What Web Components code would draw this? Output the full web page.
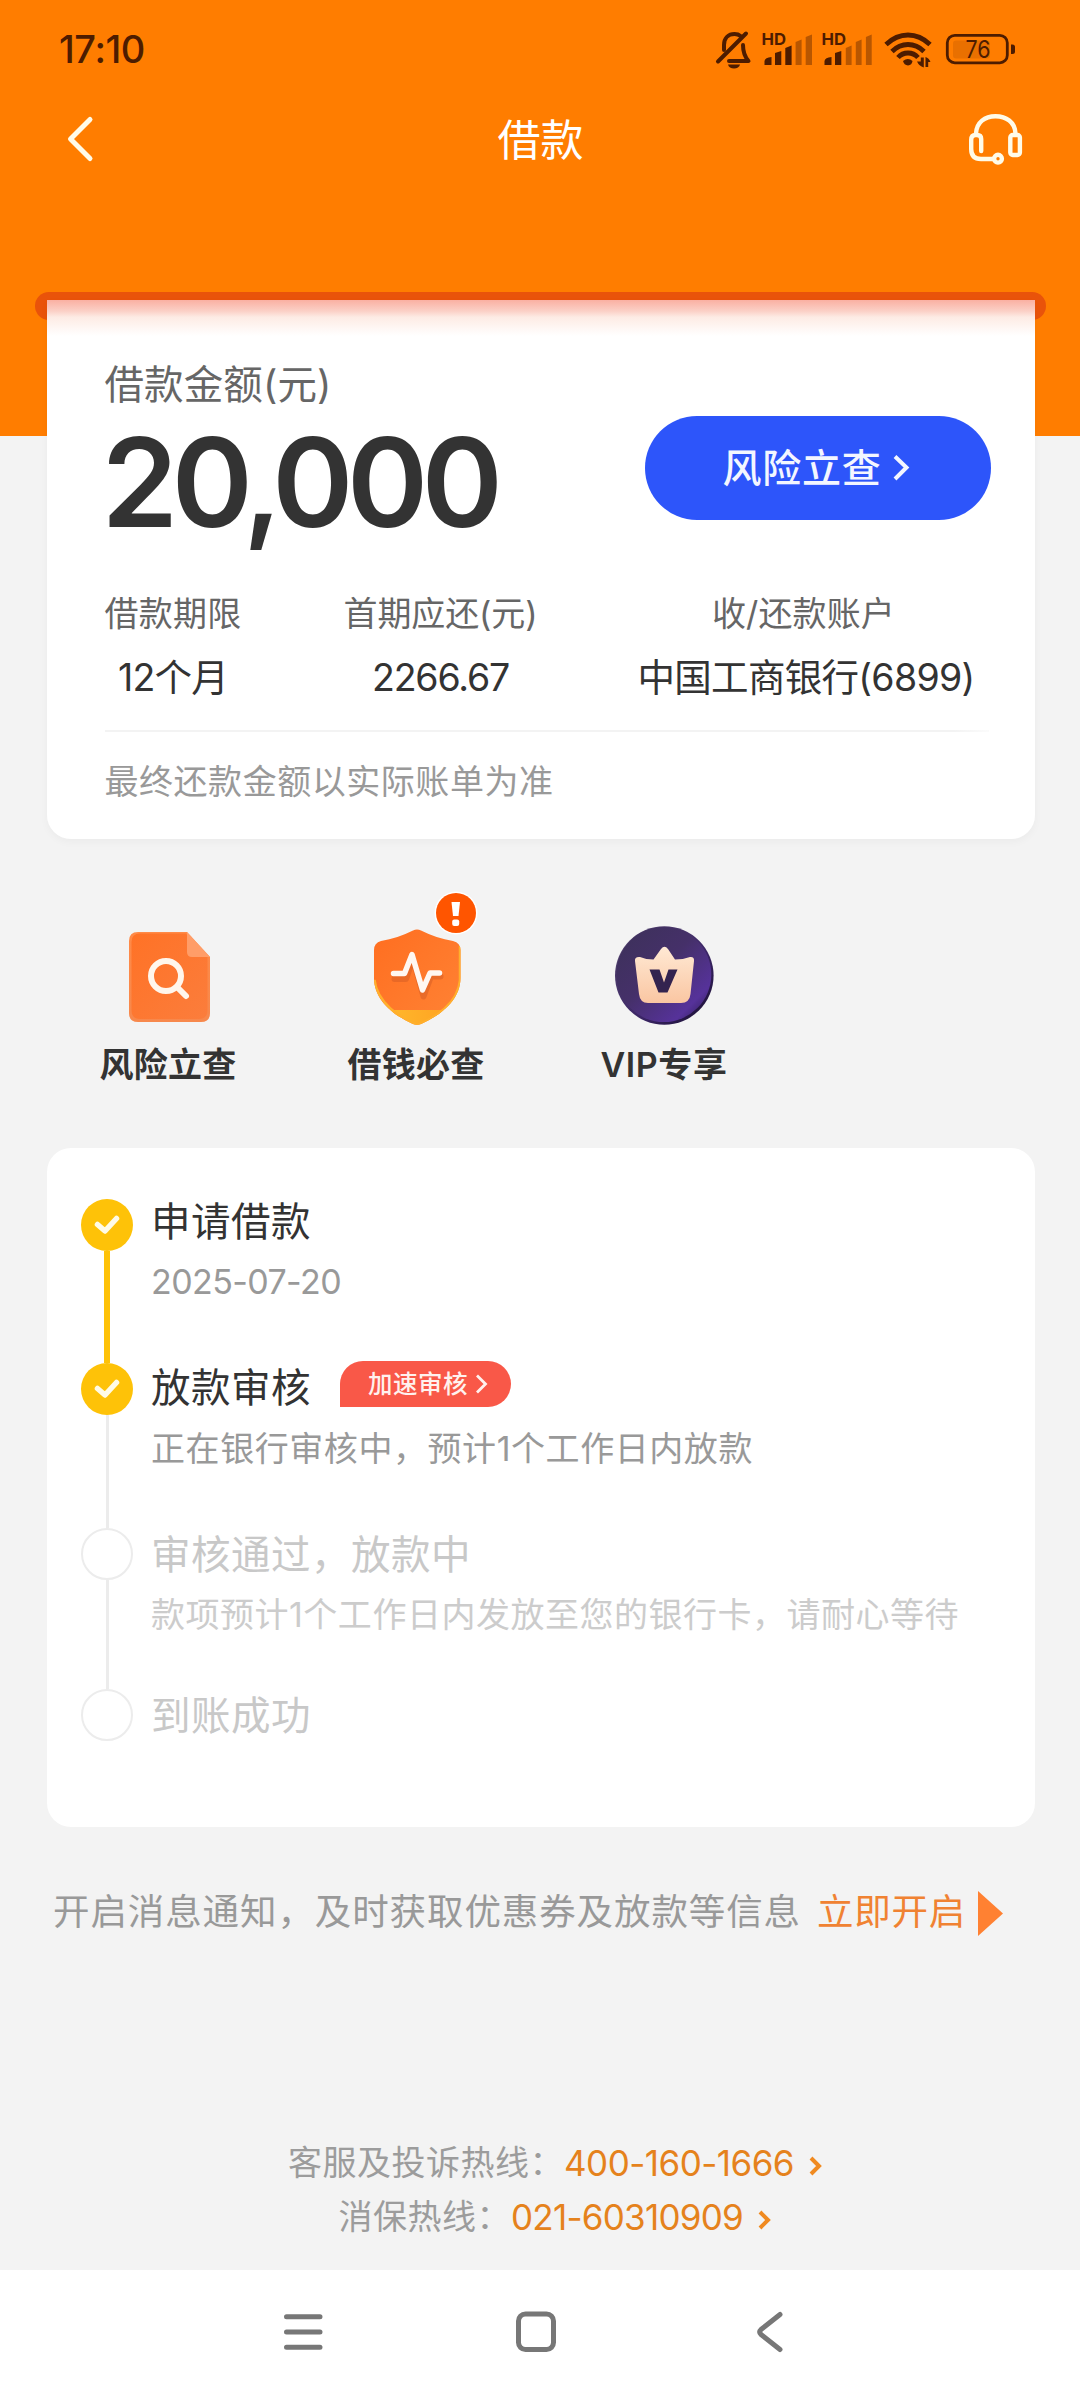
<!DOCTYPE html>
<html lang="zh-CN">
<head>
<meta charset="utf-8">
<title>借款</title>
<style>
  html, body { margin: 0; padding: 0; }
  body {
    width: 1080px; height: 2400px; overflow: hidden;
    font-family: Inter, "Noto Sans CJK SC", sans-serif;
    font-weight: 400; color: #333;
    background: #f3f3f3;
  }
</style>
</head>
<body>
<loan-page></loan-page>

<script>
const define = (name, html, init) => {
  const tpl = document.createElement('template');
  tpl.innerHTML = html;
  customElements.define(name, class extends HTMLElement {
    constructor() {
      super();
      this.attachShadow({ mode: 'open' }).appendChild(tpl.content.cloneNode(true));
    }
    connectedCallback() { if (init) init(this, this.shadowRoot); }
  });
};

define('loan-page', `
<style>
  :host { display: flex; flex-direction: column; width: 1080px; height: 2400px;
    background: linear-gradient(#ff7d00 0 436px, #f3f3f3 436px); }
</style>
<status-bar></status-bar>
<title-bar><fit-text width="86">借款</fit-text></title-bar>
<loan-card></loan-card>
<quick-links></quick-links>
<progress-card>
  <progress-step state="done" style="height:164px; --lift:-2px; --gap:12px">
    <fit-text width="160">申请借款</fit-text>
    <fit-text slot="note" width="190">2025-07-20</fit-text>
  </progress-step>
  <progress-step state="current" style="height:165px; --lift:0px; --gap:13px">
    <fit-text width="160">放款审核</fit-text>
    <speed-tag slot="extra"></speed-tag>
    <fit-text slot="note" width="602">正在银行审核中，预计1个工作日内放款</fit-text>
  </progress-step>
  <progress-step state="todo" style="height:161px; --lift:2px; --gap:12px">
    <fit-text width="320">审核通过，放款中</fit-text>
    <fit-text slot="note" width="808">款项预计1个工作日内发放至您的银行卡，请耐心等待</fit-text>
  </progress-step>
  <progress-step state="todo" last style="height:52px; --lift:2px; --gap:0px">
    <fit-text width="160">到账成功</fit-text>
  </progress-step>
</progress-card>
<notice-row></notice-row>
<hot-lines></hot-lines>
<system-nav></system-nav>
`);

define('status-bar', `
<style>
  :host { display: flex; height: 98px; align-items: center; padding: 0 63px 0 59px; color: #4d1c00; }
  .time { font-size: 38px; font-weight: 500; line-height: 48px; }
  .icons { display: flex; margin-left: auto; }
  svg { display: block; }
  text { font-family: Inter, sans-serif; fill: currentColor; }
</style>
<fit-text class="time" width="86">17:10</fit-text>
<div class="icons">
<svg width="303" height="42" viewBox="714 28 303 42" fill="currentColor">
  <g fill="none" stroke="currentColor" stroke-width="4" stroke-linecap="round" stroke-linejoin="round">
    <path d="M718 61.500L746 33.500"/>
    <path d="M724 50V45C724 38 728.500 34 734.500 34C737 34 739 34.700 740.500 36"/>
    <path d="M743 45C743 53 745 57 748.500 61H729"/>
  </g>
  <path d="M728 64.500H740C739.500 67 737 68.500 734 68.500S728.500 67 728 64.500Z"/>
  <text x="761.500" y="45" font-size="16.500" font-weight="700" textLength="24.500" lengthAdjust="spacingAndGlyphs">HD</text>
  <text x="821.500" y="45" font-size="16.500" font-weight="700" textLength="24.500" lengthAdjust="spacingAndGlyphs">HD</text>
  <path d="M764.500 65V61Q765 57.500 771.500 57V65ZM775 65V53L781.300 51V65ZM785.300 65V48L791.600 45.500V65Z"/>
  <path opacity=".4" d="M795.600 65V42L801.600 39.500V65ZM805.700 65V37L812 34.500V65Z"/>
  <path d="M824.500 65V61Q825 57.500 831.500 57V65ZM835 65V53L841.300 51V65Z"/>
  <path opacity=".4" d="M845.800 65V48L851.600 45.500V65ZM855.800 65V42L861.600 39.500V65ZM865.900 65V37L871.700 34.500V65Z"/>
  <g fill="none" stroke="currentColor" stroke-width="4.800">
    <path d="M886 44.500Q896 35 908 35T930 44.500"/>
    <path d="M892 51.500Q899 44.500 908 44.500T924 51.500"/>
    <path d="M898 57.500Q902 53 908 53T918 57.500"/>
  </g>
  <path d="M903 61Q908 57 912.500 61Q912 65 908 65.500Q904 65 903 61Z"/>
  <path d="M920.800 57.500H923.800V67.500Q919 66 917 61.500H920.800ZM925.500 67V57Q929 58 930.500 62H928.200V67Z"/>
  <rect x="947.300" y="35.300" width="60" height="27.500" rx="7.500" fill="none" stroke="currentColor" stroke-width="2.800"/>
  <rect x="953" y="40.500" width="37" height="18" rx="3" opacity=".12"/>
  <path d="M1011 44.500h1.500q2.500 0 2.500 2.500v4.500q0 2.500-2.500 2.500h-1.500z"/>
  <text x="965.500" y="58" font-size="24" font-weight="400" textLength="25" lengthAdjust="spacingAndGlyphs">76</text>
</svg>
</div>
`);

define('title-bar', `
<style>
  :host { display: flex; height: 84px; align-items: center; justify-content: space-between;
    padding: 0 56px 0 60px; color: #fff; font-size: 43px; line-height: 60px; }
  svg { display: block; }
  .side { width: 60px; }
  .title { margin-left: -3px; }
</style>
<svg class="side" width="60" height="60" viewBox="60 110 60 60" fill="none" stroke="#fffbe8" stroke-width="5" stroke-linecap="round" stroke-linejoin="round"><path d="M90 119.500L70.500 139L90 158.500"/></svg>
<span class="title"><slot></slot></span>
<svg class="side" width="60" height="60" viewBox="964 110 60 60" fill="none" stroke="#fffbe8" stroke-width="4.400" stroke-linecap="round" stroke-linejoin="round">
  <path d="M976 133.500C976.500 122 985 116.300 995.500 116.300S1015 122 1015.500 133.500"/>
  <path d="M981.200 151V139Q981.200 135 977 135H975.500Q971.200 135 971.200 140V149Q971.200 159 981 159H993"/>
  <circle cx="998" cy="158.700" r="3.900"/>
  <rect x="1010.300" y="135" width="9.600" height="20" rx="2.500"/>
</svg>
`);

define('loan-card', `
<style>
  :host { display: block; margin-top: 110px; }
  .lip { width: 1011px; height: 28px; margin-left: 35px; border-radius: 14px; background: #e9530a; }
  .card { position: relative; box-sizing: border-box; width: 988px; height: 539px; margin: -20px 0 0 46.500px;
    padding: 61px 44px 0 58px; border-radius: 0 0 24px 24px; display: flex; flex-direction: column;
    background: linear-gradient(#fab0a2 0, #fbd0c6 11px, #fdebe4 17px, #fff 36px);
    box-shadow: 0 3px 9px rgba(0,0,0,.035); }
  .top { display: flex; height: 170px; justify-content: space-between; }
  .cap { display: block; font-size: 39.500px; line-height: 48px; height: 48px; color: #666; margin-bottom: 24px; }
  .sum { display: block; font-size: 123px; line-height: 100px; font-weight: 600; color: #333; margin-left: -3px; }
  .btn { display: flex; align-items: center; box-sizing: border-box; width: 346px; height: 104px; margin-top: 55px; padding-left: 78px;
    border-radius: 52px; background: #2d55fa; color: #f3f6ff; font-size: 39px; font-weight: 500; line-height: 52px; }
  .btn svg { margin-left: 11px; }
  .stats { display: flex; gap: 102px; margin-top: 62px; color: #333; text-align: center; }
  .stats > div { display: flex; flex-direction: column; align-items: center; gap: 20px; }
  .stats .k { font-size: 34px; line-height: 41px; color: #666; }
  .stats .v { font-size: 37.500px; line-height: 48px; }
  hr { width: 884px; height: 2px; margin: 28px 0 30px; border: 0; background: linear-gradient(90deg, #f3f3f3 96%, #fbfbfb); }
  .note { font-size: 34px; line-height: 40px; color: #999; }
</style>
<div class="lip"></div>
<div class="card">
  <div class="top">
    <div>
      <fit-text class="cap" width="227">借款金额(元)</fit-text>
      <fit-text class="sum" width="395">20,000</fit-text>
    </div>
    <div class="btn"><fit-text width="159">风险立查</fit-text>
      <svg width="18" height="30" viewBox="891 455 18 30" fill="none" stroke="#f3f6ff" stroke-width="4"><path d="M894 458.500L905.500 469.500L894 481"/></svg></div>
  </div>
  <div class="stats">
    <div><fit-text class="k" width="137">借款期限</fit-text><fit-text class="v" width="110">12个月</fit-text></div>
    <div><fit-text class="k" width="194">首期应还(元)</fit-text><fit-text class="v" width="137">2266.67</fit-text></div>
    <div style="margin-left:-2px"><fit-text class="k" style="margin-left:-5px" width="183">收/还款账户</fit-text><fit-text class="v" width="337">中国工商银行(6899)</fit-text></div>
  </div>
  <hr>
  <fit-text class="note" width="449">最终还款金额以实际账单为准</fit-text>
</div>
`);

define('quick-links', `
<style>
  :host { display: flex; height: 309px; box-sizing: border-box; padding: 49px 0 0 44px; }
  div { width: 248px; display: flex; flex-direction: column; align-items: center; gap: 13px; }
  fit-text { font-size: 34px; line-height: 44px; font-weight: 600; color: #333; }
  svg { display: block; overflow: visible; }
</style>
<div>
  <svg width="140" height="142" viewBox="98 888 140 142">
    <defs>
      <linearGradient id="doc" x1="0" y1="0" x2="1" y2="1"><stop stop-color="#ff7226"/><stop offset="1" stop-color="#fb7d3c"/></linearGradient>
      <linearGradient id="rim" x1="0" y1="0" x2="0" y2="1"><stop stop-color="#ff8a47"/><stop offset="1" stop-color="#f7884c"/></linearGradient>
    </defs>
    <path d="M138 932H187L210 957V1013Q210 1022 201 1022H138Q129 1022 129 1013V941Q129 932 138 932Z" fill="url(#rim)"/>
    <path d="M140 933.500H186L207.500 957V1010Q207.500 1019 199 1019H140Q131.500 1019 131.500 1010V942Q131.500 933.500 140 933.500Z" fill="url(#doc)"/>
    <path d="M187 932L210 957H192Q187 957 187 952Z" fill="#ff9d68"/>
    <circle cx="166" cy="976" r="15" fill="none" stroke="#fff6ec" stroke-width="6"/>
    <path d="M177 987L186 996" stroke="#fff6ec" stroke-width="6" stroke-linecap="round"/>
  </svg>
  <fit-text width="137">风险立查</fit-text>
</div>
<div>
  <svg width="140" height="142" viewBox="346 888 140 142">
    <defs>
      <linearGradient id="sh" x1="0" y1="0" x2="1" y2="1"><stop stop-color="#ff6d1f"/><stop offset="1" stop-color="#ff8436"/></linearGradient>
      <linearGradient id="ye" x1="0" y1="0" x2="1" y2="0"><stop stop-color="#ffbe2e"/><stop offset="1" stop-color="#ff9d20"/></linearGradient>
      <clipPath id="cl"><path d="M413 930.500Q417 928.500 421 930.500C431 935.500 442 939 453 941Q460.500 943 460.500 950V978C460.500 1000 441 1015 421 1024Q417 1025.500 413 1024C393 1015 374 1000 374 978V950Q374 943 381 941C392 939 403 935.500 413 930.500Z"/></clipPath>
    </defs>
    <g clip-path="url(#cl)">
      <rect x="370" y="925" width="95" height="105" fill="url(#sh)"/>
      <path d="M370 1010H465V1030H370Z" fill="url(#ye)"/>
      <path d="M374.500 980C377 1003 400 1018 417 1025C436 1018 458 1003 460 980V946" fill="none" stroke="#ffb02c" stroke-width="2.500"/>
    </g>
    <path d="M393.500 976H405L412 956L422.500 993.500L430 973.500H439.500" transform="translate(1 3)" fill="none" stroke="#c85522" stroke-opacity=".4" stroke-width="6" stroke-linecap="round" stroke-linejoin="round"/>
    <path d="M393.500 973.500H404.500L412 954.500L422.500 990L430 973H439.500" fill="none" stroke="#fff7f1" stroke-width="5.500" stroke-linecap="round" stroke-linejoin="round"/>
    <circle cx="456" cy="913" r="21.500" fill="#fff"/>
    <circle cx="456" cy="913" r="20" fill="#ff5500"/>
    <path d="M451.500 902H460L458.500 916H453Z" fill="#fff"/>
    <rect x="452.200" y="919.500" width="7" height="6.500" rx="2" fill="#fff"/>
  </svg>
  <fit-text width="137">借钱必查</fit-text>
</div>
<div>
  <svg width="140" height="142" viewBox="594 888 140 142">
    <defs>
      <linearGradient id="vp" x1="0" y1="0" x2="1" y2="1"><stop stop-color="#3c3159"/><stop offset=".45" stop-color="#453069"/><stop offset=".8" stop-color="#56329a"/><stop offset="1" stop-color="#271947"/></linearGradient>
      <linearGradient id="vr" x1="0" y1="0" x2="1" y2="1"><stop stop-color="#57486f"/><stop offset=".6" stop-color="#3b2566"/><stop offset="1" stop-color="#160c2c"/></linearGradient>
      <linearGradient id="cr" x1="0" y1="0" x2="0" y2="1"><stop stop-color="#ffe9d4"/><stop offset="1" stop-color="#fac6a2"/></linearGradient>
    </defs>
    <circle cx="664.300" cy="975.500" r="49.300" fill="url(#vr)"/>
    <circle cx="663.800" cy="974.500" r="47.500" fill="url(#vp)"/>
    <path d="M661 949Q664.500 944.500 668 949L675 959.500Q683 959.500 690 957Q694.500 956.500 694 961L690.500 994Q689.500 1003 681 1003H648Q640 1003 639 994L635 961Q634.500 956.500 640 957Q646 959.500 653.500 959.500Z" fill="url(#cr)"/>
    <path d="M649.500 969.500H659.500L664 982.500L668.500 969.500H677.500L667.500 992.500H658.500Z" fill="#33234f"/>
  </svg>
  <fit-text width="127">VIP专享</fit-text>
</div>
`);

define('progress-card', `
<style>
  :host { display: flex; flex-direction: column; box-sizing: border-box; width: 988px; height: 679px; margin-left: 46.500px;
    padding: 51px 30px 0 34.500px; border-radius: 24px; background: #fff; }
</style>
<slot></slot>
`);

define('progress-step', `
<style>
  :host { display: flex; gap: 18px; --title: #333; --sub: #999; }
  :host([state="todo"]) { --title: #c8c8c8; --sub: #ccc; }
  .rail { width: 52px; display: flex; flex-direction: column; align-items: center; }
  .dot { box-sizing: border-box; flex: none; width: 52px; height: 52px; border-radius: 50%; background: #fec208; display: flex; align-items: center; justify-content: center; }
  .line { flex: 1; width: 6px; background: #fec208; }
  :host([state="current"]) .line, :host([state="todo"]) .line { width: 3px; background: #ececec; }
  :host([state="todo"]) .dot { background: #fff; border: 2.500px solid #ececec; }
  :host([state="todo"]) svg, :host([last]) .line { display: none; }
  .body { display: flex; flex-direction: column; gap: var(--gap); margin-top: var(--lift); }
  .head { display: flex; height: 50px; gap: 29px; font-size: 39.500px; line-height: 50px; color: var(--title); }
  .sub { font-size: 34px; line-height: 46px; color: var(--sub); }
</style>
<div class="rail">
  <div class="dot"><svg width="28" height="22" viewBox="0 0 28 22" fill="none" stroke="#fffbe6" stroke-width="5.500" stroke-linecap="round" stroke-linejoin="round"><path d="M4.500 10.500L12 17L23.500 4.500"/></svg></div>
  <div class="line"></div>
</div>
<div class="body">
  <div class="head"><slot></slot><slot name="extra"></slot></div>
  <div class="sub"><slot name="note"></slot></div>
</div>
`);

define('speed-tag', `
<style>
  :host { display: flex; box-sizing: border-box; width: 171px; height: 46px; margin-top: -2px; padding-left: 28px; align-items: center; gap: 7px;
    border-radius: 23px 23px 23px 0; background: #f95848; color: #fff1ee; font-size: 24.500px; font-weight: 500; line-height: 30px; }
</style>
<fit-text width="100">加速审核</fit-text>
<svg width="14" height="22" viewBox="0 0 14 22" fill="none" stroke="#fff1ee" stroke-width="2.800"><path d="M2 2.500L10.500 11L2 19.500"/></svg>
`);

define('notice-row', `
<style>
  :host { display: flex; height: 46px; margin: 62px 0 0 53px; align-items: center; font-size: 36.500px; line-height: 46px; color: #999; }
  .go { color: #f08232; margin-left: 16px; }
  svg { margin: 3px 0 0 12px; }
</style>
<fit-text width="748">开启消息通知，及时获取优惠券及放款等信息</fit-text>
<fit-text class="go" width="149">立即开启</fit-text>
<svg width="25" height="45" viewBox="0 0 25 45"><path d="M0 0L25 22.500L0 45Z" fill="#ff8132"/></svg>
`);

define('hot-lines', `
<style>
  :host { display: flex; flex-direction: column; gap: 10px; height: 129px; margin-top: 206px; }
  div { display: flex; height: 44px; align-items: center; font-size: 34px; line-height: 44px; color: #9c9c9c; }
  .a { padding-left: 288px; } .b { padding-left: 338.500px; }
  .num { color: #e5821c; font-size: 35px; }
  svg { margin: 5px 0 0 15px; }
</style>
<div class="a"><fit-text width="276">客服及投诉热线：</fit-text><fit-text class="num" width="230">400-160-1666</fit-text>
  <svg width="13" height="22" viewBox="0 0 13 22" fill="none" stroke="#f08a20" stroke-width="4"><path d="M2 3L10 11L2 19"/></svg></div>
<div class="b"><fit-text width="172.500">消保热线：</fit-text><fit-text class="num" width="232">021-60310909</fit-text>
  <svg width="13" height="22" viewBox="0 0 13 22" fill="none" stroke="#f08a20" stroke-width="4"><path d="M2 3L10 11L2 19"/></svg></div>
`);

define('system-nav', `
<style>
  :host { display: flex; flex: 1; align-items: flex-start; background: #fff; box-sizing: border-box; padding: 38px 0 0 282px; }
  svg { display: block; }
  .home { margin: 0 198px 0 189px; }
</style>
<svg width="43" height="48" viewBox="282 2308 43 48" stroke="#777" stroke-width="5" stroke-linecap="round"><path d="M286.500 2316.700H320M286.500 2332H320M286.500 2347.300H320"/></svg>
<svg class="home" width="44" height="48" viewBox="514 2308 44 48" fill="none" stroke="#777" stroke-width="5"><rect x="518.500" y="2314" width="35" height="35.500" rx="7"/></svg>
<svg width="28" height="48" viewBox="756 2308 28 48" fill="none" stroke="#777" stroke-width="5" stroke-linecap="round" stroke-linejoin="round"><path d="M780 2314.500L761 2329.500Q758.500 2332 761 2334.500L780 2349.500"/></svg>
`);

/* Spreads a single line of text evenly over the given width. */
define('fit-text', `
<style>
  :host { display: block; white-space: nowrap; width: max-content; flex: none; }
</style>
<span><slot></slot></span>
`, (host, root) => {
  const want = parseFloat(host.getAttribute('width'));
  const span = root.querySelector('span');
  const natural = span.getBoundingClientRect().width;
  const count = [...host.textContent].length;
  host.style.letterSpacing = ((want - natural) / count).toFixed(3) + 'px';
});
</script>
</body>
</html>
